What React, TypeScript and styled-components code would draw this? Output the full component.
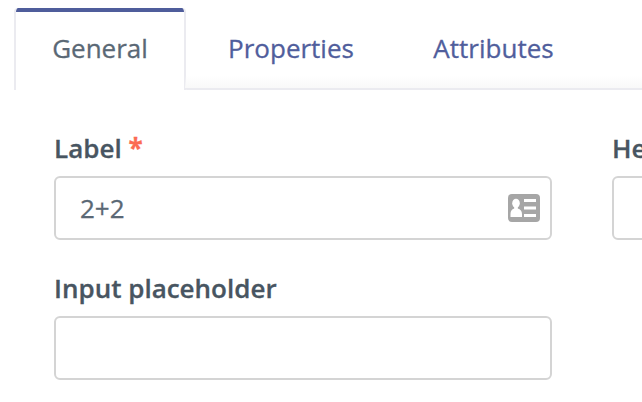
import React from "react";
import styled, { createGlobalStyle } from "styled-components";

const GlobalStyle = createGlobalStyle`
  *, *::before, *::after { box-sizing: border-box; }
  html, body { margin: 0; overflow: hidden; background: #fff; }
  body {
    font-family: "Open Sans", "Noto Sans", sans-serif;
    color: #5a6875;
    -webkit-text-stroke: 0.3px currentColor;
  }
`;

const Page = styled.main`
  width: 642px;
  height: 402px;
  padding-top: 8px;
  overflow: hidden;
  background: #fff;
`;

const TabBar = styled.nav`
  display: flex;
  height: 82px;
  margin-left: 14px;
`;

const Tab = styled.button<{ $active?: boolean; $width: number }>`
  width: ${(p) => p.$width}px;
  height: 82px;
  padding: 0 0 2px;
  flex: none;
  border: 0 solid #ebebf0;
  border-width: ${(p) => (p.$active ? "0 2px" : "0")};
  border-radius: 4px 4px 0 0;
  background: ${(p) =>
    p.$active ? "linear-gradient(#4f5d9b 4px, #fff 4px) border-box" : "transparent"};
  background-clip: padding-box;
  color: ${(p) => (p.$active ? "#5a6875" : "#505e9c")};
  font: 400 26px/36px "Open Sans", sans-serif;
  -webkit-text-stroke: 0.3px currentColor;
  white-space: nowrap;
`;

const InactiveTabs = styled.div`
  display: flex;
  flex: 1;
  margin-left: -1px;
  padding-left: 1px;
  border-bottom: 2px solid #ebebf0;
  border-bottom-left-radius: 2px;
  background: linear-gradient(#fff0 68px, #f9f9f9 80px);
`;

const Form = styled.form`
  display: grid;
  grid-template-columns: 498px 498px;
  column-gap: 60px;
  row-gap: 30px;
  padding: 40px 0 0 54px;
`;

const Field = styled.div`
  display: flex;
  flex-direction: column;
`;

const Label = styled.label`
  height: 46px;
  font-size: 26px;
  line-height: 36px;
  font-weight: 600;
  color: #485561;
  white-space: nowrap;
`;

const Required = styled.span`
  color: #fb6b53;
  font-weight: 700;
`;

const InputBox = styled.div`
  display: flex;
  align-items: center;
  height: 64px;
  padding: 0 10px 0 24px;
  border: 2px solid #d4d4d4;
  border-radius: 6px;
  background: #fff;
`;

const Input = styled.input`
  flex: 1;
  min-width: 0;
  padding: 0;
  border: 0;
  outline: 0;
  background: transparent;
  color: #5a6875;
  font: 400 26px/36px "Open Sans", sans-serif;
  -webkit-text-stroke: 0.3px currentColor;
`;

const ContactIcon = () => (
  <svg width="32" height="28" viewBox="0 0 32 28" aria-hidden="true">
    <rect width="32" height="28" rx="4" fill="#a6a6a6" />
    <g fill="#fff">
      <ellipse cx="8" cy="9.2" rx="3.8" ry="4.5" />
      <path d="M6.2 12h3.6v2.6c2.7 1 4.2 2.5 4.2 5.4v3H2.5v-3c0-2.900 1.200-4.400 3.700-5.400z" />
      <path d="M16 5h12v3H16zM16 12.500h12v3H16zM16 20h12v3H16z" />
    </g>
  </svg>
);

export default function App() {
  return (
    <Page>
      <GlobalStyle />
      <TabBar>
        <Tab $active $width={172}>General</Tab>
        <InactiveTabs>
          <Tab $width={210}>Properties</Tab>
          <Tab $width={195}>Attributes</Tab>
        </InactiveTabs>
      </TabBar>
      <Form>
        <Field>
          <Label htmlFor="label">Label <Required>*</Required></Label>
          <InputBox><Input id="label" defaultValue="2+2" /><ContactIcon /></InputBox>
        </Field>
        <Field>
          <Label htmlFor="help">Help text</Label>
          <InputBox><Input id="help" /></InputBox>
        </Field>
        <Field>
          <Label htmlFor="placeholder">Input placeholder</Label>
          <InputBox><Input id="placeholder" /></InputBox>
        </Field>
      </Form>
    </Page>
  );
}
